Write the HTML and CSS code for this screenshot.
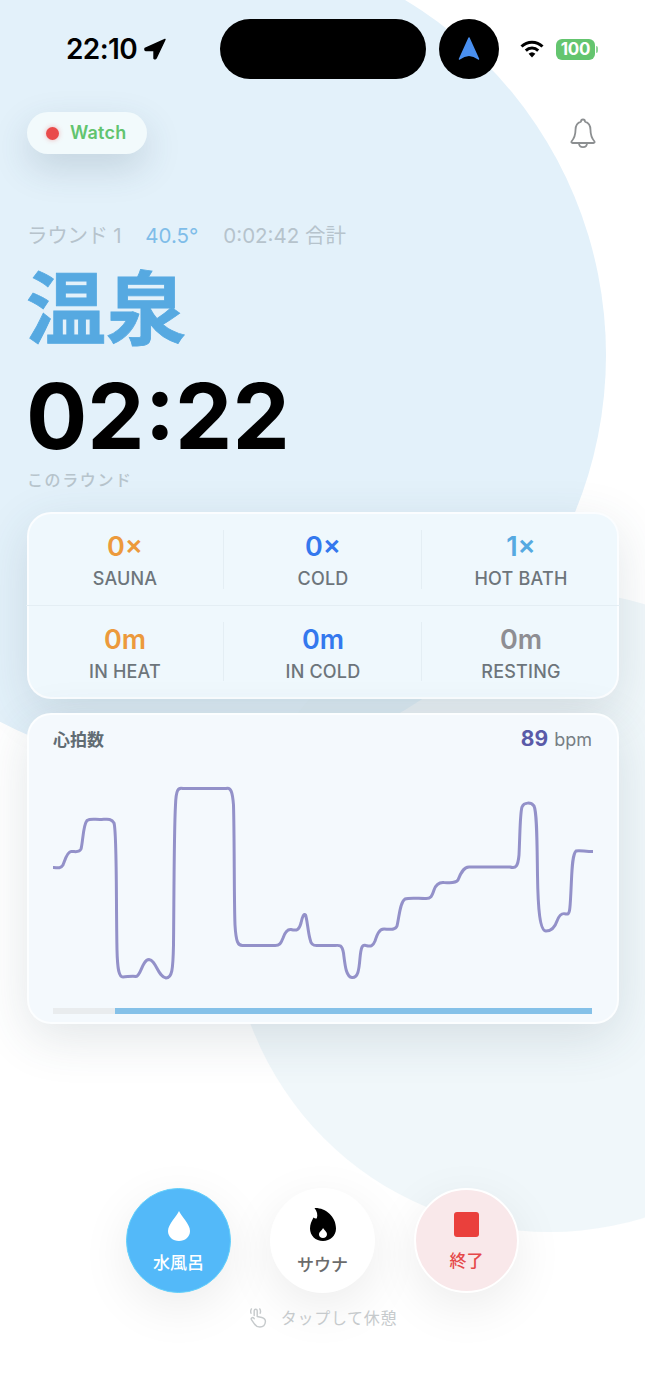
FILE: index.html
```html
<!DOCTYPE html>
<html lang="ja">
<head>
    <meta charset="UTF-8">
    <meta name="viewport" content="width=device-width, initial-scale=1.0">
    <title>温泉</title>
    <link rel="stylesheet" href="styles.css">
</head>
<body>
<div class="screen">
    <div class="blob blob-top"></div>
    <div class="blob blob-bottom"></div>

    <div class="status-bar">
        <div class="status-time">
            <span>22:10</span>
            <svg class="loc-arrow" viewBox="0 0 22 22"><path d="M21 1.5 L1 10.5 Q0.5 12.5 2 12.6 L10 12.6 L10 20.5 Q11.5 21.5 12.2 20 Z" fill="#000" stroke="#000" stroke-width="1.4" stroke-linejoin="round"/></svg>
        </div>
        <div class="island"></div>
        <div class="island-dot">
            <svg viewBox="0 0 24 26" class="nav-arrow"><path d="M12 2 L21.5 23 Q12 15.5 2.5 23 Z" fill="#4a90f0" stroke="#4a90f0" stroke-width="1.5" stroke-linejoin="round"/></svg>
        </div>
        <svg class="wifi" viewBox="0 0 24 18">
            <path d="M1.5 6.5 A15 15 0 0 1 22.5 6.5" fill="none" stroke="#000" stroke-width="3"/>
            <path d="M5.8 10.6 A9 9 0 0 1 18.2 10.6" fill="none" stroke="#000" stroke-width="3"/>
            <path d="M12 17.5 L8.6 13.8 A5 5 0 0 1 15.4 13.8 Z" fill="#000"/>
        </svg>
        <div class="battery"><span class="battery-level">100</span><span class="battery-nub"></span></div>
    </div>

    <div class="top-row">
        <div class="watch-pill">
            <span class="watch-dot"></span>
            <span class="watch-label">Watch</span>
        </div>
        <svg class="bell" viewBox="0 0 28 32" fill="none" stroke="#8c8f91" stroke-width="1.8" stroke-linejoin="round">
            <path d="M14 2.5 C15.5 2.5 16 3.6 16 4.6 C20 5.8 21.5 9 21.5 13 C21.5 18 22.5 21 25.5 24.5 Q26 26 24.5 26 L3.5 26 Q2 26 2.5 24.5 C5.5 21 6.5 18 6.5 13 C6.5 9 8 5.8 12 4.6 C12 3.6 12.5 2.5 14 2.5 Z"/>
            <path d="M10 26 C10 31.5 18 31.5 18 26"/>
        </svg>
    </div>

    <div class="session">
        <div class="session-meta">
            <span class="session-round">ラウンド 1</span>
            <span class="session-temp">40.5°</span>
            <span>0:02:42 合計</span>
        </div>
        <h1 class="session-title">温泉</h1>
        <div class="session-timer">02:22</div>
        <div class="session-caption">このラウンド</div>
    </div>

    <div class="card stats">
        <div class="stat"><div class="stat-value orange">0×</div><div class="stat-label">SAUNA</div></div>
        <div class="stat"><div class="stat-value blue">0×</div><div class="stat-label">COLD</div></div>
        <div class="stat"><div class="stat-value sky">1×</div><div class="stat-label">HOT BATH</div></div>
        <div class="stat"><div class="stat-value orange">0m</div><div class="stat-label">IN HEAT</div></div>
        <div class="stat"><div class="stat-value blue">0m</div><div class="stat-label">IN COLD</div></div>
        <div class="stat"><div class="stat-value gray">0m</div><div class="stat-label">RESTING</div></div>
    </div>

    <div class="card heart">
        <div class="heart-head">
            <span class="heart-title">心拍数</span>
            <span class="heart-rate"><b>89</b> bpm</span>
        </div>
        <svg class="heart-chart" viewBox="53 760 540 240">
            <path d="M53 867.5 C58 868 61 868.5 63 865 C65 860 67 852 71 851.5 C74 851 79 853.5 81 849 C83 842 83 825 87 820.5 C90 818.5 94 819.5 100 819.5 C106 819.5 111 817.5 114 823 C117 832 116 900 117 950 C117.5 970 119 977 123 977 C127 977 132 975.5 136 976.5 C141 976 142 960 149 959.5 C156 960 158 977 166 978 C172 978 173 970 173.5 945 C174 900 174 830 175.5 805 C176 790 178 787 183 788.5 L226 788.5 C231 787 232.5 792 233.5 805 C234.5 840 234 900 235 925 C236 942 238 946 243 945.5 L274 945.5 C280 946 281 943 283 938 C285 932 287 929 291 929.5 C297 931 299 930 301 923 C302.5 916 304 913 305.5 915 C307 918 308 932 310 939 C311 945 314 946 318 945.5 L335 945.5 C340 945 342 945 343.5 953 C345 965 346 977 352 977.5 C358 978 359 970 360 958 C361 948 362 944 366 945.5 C371 947 373 946 375 941 C377 935 379 929 384 929 C388 929 395 931 397 926 C399 918 400 902 405 899 C409 897.5 418 898.5 425 898.5 C431 899 432 896 434 890 C436 884 439 882 444 882.5 C449 882.5 455 884 458 880 C460 875 463 867 469 867 L510 867 C516 869 518 866 519 855 C520 835 520 813 522 807 C524 802 531 802 534 806 C537 812 537 840 537.5 875 C538 910 540 931 546 931 C552 931 555 927 557 921 C560 913 563 913 566 914 C570 915 570 910 571 890 C572 870 572 855 576 851 C579 850 585 851.5 593 851.5" fill="none" stroke="#9391c9" stroke-width="3" stroke-linecap="round" stroke-linejoin="round"/>
        </svg>
        <div class="heart-track">
            <div class="heart-track-rest"></div>
            <div class="heart-track-fill"></div>
        </div>
    </div>

    <div class="actions">
        <div class="action action-cold">
            <svg class="action-icon" viewBox="0 0 24 32"><path d="M12 1 C14 6 23 14 23 21 C23 27 18 31 12 31 C6 31 1 27 1 21 C1 14 10 6 12 1 Z" fill="#fff"/></svg>
            <span>水風呂</span>
        </div>
        <div class="action action-sauna">
            <svg class="action-icon action-flame" viewBox="0 0 28 34"><path fill-rule="evenodd" d="M5.5 1 C16 0.5 27 9 27 21.5 C27 29 21 34 14 34 C6.5 34 1 28.5 1 21.5 C1 17.5 2.5 14 4.5 10.5 C5.5 11.5 7 11.8 7.8 11.2 C9 8 8 4 5.5 1 Z M14 21 C13.5 23 10 24.5 10 27.5 C10 29.7 11.7 31 14 31 C16.3 31 18 29.5 18 27 C18 24.8 15.2 23 14 21 Z" fill="#000"/></svg>
            <span>サウナ</span>
        </div>
        <div class="action action-stop">
            <span class="stop-square"></span>
            <span>終了</span>
        </div>
    </div>

    <div class="hint">
        <svg class="hint-icon" viewBox="0 0 20 22" fill="none" stroke="#c6cacc" stroke-width="1.5" stroke-linecap="round" stroke-linejoin="round">
            <path d="M6.5 9 L6.5 4 A1.6 1.6 0 0 1 9.7 4 L9.7 10 L14.5 11 C17 11.6 18.5 13 18.3 15.5 C18 19 15.5 21 12.5 21 C9.5 21 8 19.8 6.5 17.5 L3.6 13.2 C2.8 11.8 4.8 10.4 6 11.6 L6.5 12.2"/>
            <path d="M3.2 6.5 A5 5 0 0 1 3.6 2 M12.8 6.5 A5 5 0 0 0 12.4 2"/>
        </svg>
        <span>タップして休憩</span>
    </div>
</div>
</body>
</html>
```

FILE: styles.css
```css
* {
    box-sizing: border-box;
    margin: 0;
    padding: 0;
}
body {
    background: #fff;
    font-family: Inter, "Noto Sans CJK JP", sans-serif;
}
.screen {
    position: relative;
    width: 645px;
    height: 1400px;
    overflow: hidden;
    background: #fff;
}
.blob {
    position: absolute;
    border-radius: 50%;
}
.blob-top {
    left: -222px;
    top: -59px;
    width: 828px;
    height: 828px;
    background: #e3f1fa;
}
.blob-bottom {
    left: 230px;
    top: 590px;
    width: 640px;
    height: 642px;
    background: rgba(225, 239, 245, 0.5);
}

/* status bar */
.status-bar {
    position: relative;
    display: flex;
    align-items: center;
    height: 60px;
    margin-top: 19px;
    padding-left: 66px;
}
.status-time {
    display: flex;
    align-items: center;
    gap: 7px;
    width: 154px;
    font-size: 28px;
    font-weight: 600;
    letter-spacing: -0.6px;
    color: #000;
}
.loc-arrow {
    width: 22px;
    height: 22px;
}
.island {
    width: 206px;
    height: 60px;
    border-radius: 30px;
    background: #000;
}
.island-dot {
    display: flex;
    align-items: center;
    justify-content: center;
    width: 60px;
    height: 60px;
    margin-left: 13px;
    border-radius: 50%;
    background: #000;
}
.nav-arrow {
    width: 24px;
    height: 26px;
}
.wifi {
    width: 24px;
    height: 18px;
    margin-left: 21px;
}
.battery {
    display: flex;
    align-items: center;
    margin-left: 12px;
}
.battery-level {
    width: 39px;
    height: 21px;
    border-radius: 6px;
    background: #64c56f;
    color: #fff;
    font-size: 17px;
    font-weight: 700;
    line-height: 21px;
    text-align: center;
    letter-spacing: -0.3px;
}
.battery-nub {
    width: 2px;
    height: 7px;
    margin-left: 1px;
    border-radius: 0 2px 2px 0;
    background: #8fd498;
}

/* watch + bell */
.top-row {
    position: relative;
    display: flex;
    justify-content: space-between;
    align-items: center;
    margin-top: 33px;
    padding: 0 48px 0 27px;
}
.watch-pill {
    display: flex;
    align-items: center;
    gap: 11px;
    width: 120px;
    height: 42px;
    padding-left: 19px;
    border-radius: 21px;
    background: #f2fafc;
    box-shadow: 0 14px 36px rgba(50, 80, 100, 0.18);
}
.watch-dot {
    width: 13px;
    height: 13px;
    border-radius: 50%;
    background: #e94b4b;
    box-shadow: 0 0 5px rgba(233, 75, 75, 0.4);
}
.watch-label {
    font-size: 18px;
    font-weight: 600;
    letter-spacing: 0.2px;
    line-height: 20px;
    color: #62c46f;
}
.bell {
    width: 28px;
    height: 32px;
}

/* session header */
.session {
    position: relative;
    margin-top: 68px;
    padding-left: 27px;
}
.session-meta {
    display: flex;
    gap: 24px;
    height: 28px;
    font-size: 20.5px;
    line-height: 28px;
    color: #b6c3cc;
}
.session-round {
    letter-spacing: -0.3px;
}
.session-temp {
    width: 54px;
    color: #7fbde9;
}
.session-title {
    height: 90px;
    margin-top: 14px;
    margin-left: -1px;
    font-size: 80px;
    font-weight: 700;
    line-height: 90px;
    -webkit-text-stroke: 0.8px #56a9e1;
    color: #56a9e1;
}
.session-timer {
    height: 100px;
    margin-top: 12px;
    margin-left: -1px;
    font-size: 91px;
    font-weight: 700;
    line-height: 100px;
    color: #000;
}
.session-caption {
    margin-top: 2px;
    font-size: 16px;
    font-weight: 500;
    line-height: 24px;
    letter-spacing: 1.6px;
    color: #b7c4cc;
}

/* cards */
.card {
    position: relative;
    width: 592px;
    margin-left: 27px;
    border: 2px solid rgba(255, 255, 255, 0.75);
    border-radius: 24px;
    box-shadow: 0 14px 50px rgba(50, 75, 95, 0.14);
}
.stats {
    display: grid;
    grid-template-columns: repeat(3, 198px);
    justify-content: center;
    height: 187px;
    margin-top: 20px;
    background: #eff8fd;
}
.stat {
    position: relative;
    padding-top: 16px;
    text-align: center;
}
.stat:nth-child(n+4) {
    padding-top: 17px;
    border-top: 1px solid #e4eef4;
}
.stat:not(:nth-child(3n))::after {
    content: "";
    position: absolute;
    top: 16px;
    bottom: 16px;
    right: 0;
    width: 1px;
    background: #e4eef4;
}
.stat-value {
    font-size: 27px;
    font-weight: 600;
    line-height: 34px;
}
.stat-label {
    margin-top: 3px;
    font-size: 18px;
    font-weight: 500;
    line-height: 24px;
    letter-spacing: 0.2px;
    color: #6d757b;
}
.orange { color: #ec9a3c; }
.blue { color: #3478ee; }
.sky { color: #56a9e1; }
.gray { color: #8e8e93; }

.heart {
    height: 311px;
    margin-top: 14px;
    padding: 10px 25px 0 24px;
    background: #f4f9fd;
}
.heart-head {
    display: flex;
    justify-content: space-between;
    align-items: center;
    height: 26px;
}
.heart-title {
    font-size: 17px;
    font-weight: 700;
    color: #616c73;
}
.heart-rate {
    font-size: 18px;
    word-spacing: 1px;
    color: #777e84;
}
.heart-rate b {
    font-size: 21px;
    font-weight: 700;
    color: #5a5aa8;
}
.heart-chart {
    display: block;
    width: 540px;
    height: 240px;
    margin-top: 9px;
}
.heart-track {
    display: flex;
    height: 6px;
    margin-top: 8px;
}
.heart-track-rest {
    width: 62px;
    background: #e9ecee;
}
.heart-track-fill {
    flex: 1;
    background: #85c1e8;
}

/* bottom buttons */
.actions {
    position: relative;
    display: flex;
    justify-content: center;
    gap: 39px;
    margin-top: 164px;
}
.action {
    display: flex;
    flex-direction: column;
    align-items: center;
    width: 105px;
    height: 105px;
    border-radius: 50%;
    font-size: 17px;
    font-weight: 500;
    box-shadow: 0 14px 50px rgba(0, 0, 0, 0.08);
}
.action-icon {
    height: 32px;
    margin-top: 21px;
}
.action-flame {
    height: 34px;
    margin-top: 19px;
}
.action span:last-child {
    line-height: 24px;
}
.action-cold {
    background: #53b9f9;
    border: 1px solid #62d0fb;
    color: #fff;
}
.action-cold span:last-child {
    margin-top: 9px;
}
.action-sauna {
    background: #fff;
    color: #6b6b6b;
}
.action-sauna span:last-child {
    margin-top: 12px;
}
.action-stop {
    background: #f9e8ea;
    border: 2px solid #fff;
    color: #e5484a;
}
.stop-square {
    width: 25px;
    height: 25px;
    margin-top: 22px;
    border-radius: 3px;
    background: #ea403c;
}
.action-stop span:last-child {
    margin-top: 12px;
}
.hint {
    position: relative;
    display: flex;
    justify-content: center;
    align-items: center;
    gap: 14px;
    height: 24px;
    margin-top: 12px;
    font-size: 16px;
    letter-spacing: 0.7px;
    color: #c6cacc;
}
.hint-icon {
    width: 19px;
    height: 21px;
}
```
